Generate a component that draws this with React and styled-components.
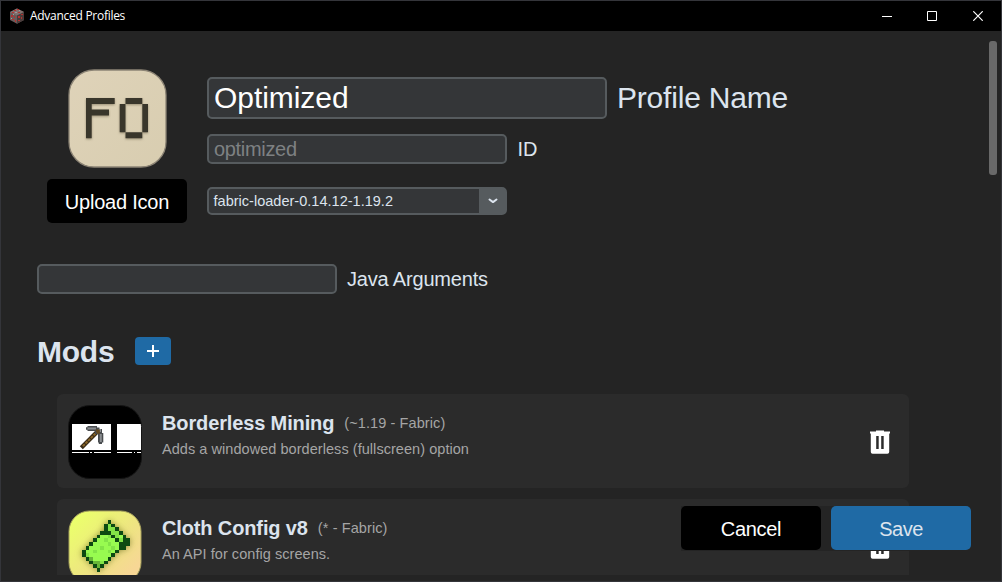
import React from "react";
import styled, { createGlobalStyle } from "styled-components";

const Global = createGlobalStyle`
  * { box-sizing: border-box; }
  body { margin: 0; background: #242424; }
  button, input { font-family: "Liberation Sans", Arial, sans-serif; }
`;

const Window = styled.div`
  position: relative;
  display: flex;
  flex-direction: column;
  width: 1002px;
  height: 582px;
  overflow: hidden;
  background: #242424;
  border: 1px solid #34353a;
  font-family: "Liberation Sans", Arial, sans-serif;
  color: #dce4ee;
  white-space: nowrap;
`;

const TitleBar = styled.header`
  display: flex;
  align-items: center;
  flex: none;
  height: 30px;
  padding-left: 8px;
  background: #000;
`;

const TitleText = styled.span`
  flex: 1;
  margin-left: 5px;
  font: 12px/16px "Open Sans", "Noto Sans", sans-serif;
  letter-spacing: -0.28px;
  color: #fff;
`;

const Control = styled.div`
  display: grid;
  place-items: center;
  width: ${(p) => p.$width || 46}px;
  height: 30px;
`;

const Body = styled.main`
  display: flex;
  flex: none;
  height: 544px;
  justify-content: space-between;
  overflow: hidden;
`;

const Content = styled.div`
  display: flex;
  flex-direction: column;
  width: 908px;
  padding: 38px 0 0 36px;
`;

const ScrollThumb = styled.div`
  width: 8px;
  height: 134px;
  margin: 10px 4px 0 0;
  border-radius: 3px;
  background: #696969;
`;

const ProfileHeader = styled.section`
  display: flex;
  height: 154px;
  padding-left: 10px;
`;

const IconColumn = styled.div`
  display: flex;
  flex-direction: column;
  align-items: center;
  width: 140px;
  margin-right: 20px;
  gap: 11px;
`;

const Fields = styled.div`
  display: flex;
  flex-direction: column;
  align-items: flex-start;
  padding-top: 8px;
`;

const FieldRow = styled.label`
  display: flex;
  align-items: center;
  gap: ${(p) => p.$gap || 10}px;
  margin-bottom: ${(p) => p.$below || 0}px;
  font-size: ${(p) => p.$size}px;
  letter-spacing: ${(p) => p.$spacing || 0}px;
`;

const Input = styled.input`
  width: ${(p) => p.$width}px;
  height: ${(p) => p.$height}px;
  padding: 0 5px;
  border: 2px solid #565b5e;
  border-radius: 5px;
  outline: none;
  background: #343638;
  color: #fff;
  font-size: inherit;
  letter-spacing: ${(p) => p.$spacing || 0}px;
  &::placeholder { color: #7e8183; opacity: 1; }
`;

const Combo = styled.div`
  display: flex;
  width: 300px;
  height: 28px;
  border: 2px solid #565b5e;
  border-radius: 5px;
  background: #343638;
  font-size: 14.5px;
  line-height: 24px;
`;

const ComboValue = styled.span`
  flex: 1;
  padding-left: 4.5px;
  letter-spacing: 0.02px;
`;

const ComboArrow = styled.span`
  display: grid;
  place-items: center;
  width: 26px;
  padding-left: 2px;
  background: #565b5e;
`;

const Button = styled.button`
  width: 140px;
  height: 44px;
  padding: 2px 0 0;
  border: 0;
  border-radius: 5px;
  background: ${(p) => (p.$primary ? "#1f6aa5" : "#000")};
  color: ${(p) => (p.$primary ? "#dce4ee" : "#fff")};
  font-size: 20px;
  letter-spacing: ${(p) => p.$spacing || 0}px;
`;

const JavaSection = styled.section`
  margin-top: 41px;
`;

const ModsHeader = styled.section`
  display: flex;
  align-items: center;
  height: 34px;
  margin-top: 40px;
  gap: 21px;
`;

const Heading = styled.h2`
  width: 77px;
  margin: 0;
  padding-top: 2px;
  font-size: 30px;
  line-height: 34px;
  letter-spacing: -0.25px;
`;

const AddButton = styled.button`
  display: grid;
  place-items: center;
  width: 36px;
  height: 28px;
  padding: 0;
  border: 0;
  border-radius: 4px;
  background: #1f6aa5;
`;

const ModList = styled.section`
  display: flex;
  flex-direction: column;
  gap: 11px;
  margin: 26px 0 0 20px;
`;

const ModCard = styled.article`
  display: flex;
  flex: none;
  width: 852px;
  height: 94px;
  padding: 11px 19px 0 11px;
  border-radius: 6px;
  background: #2b2b2b;
`;

const ModText = styled.div`
  flex: 1;
  margin-left: 20px;
  padding-top: 6px;
`;

const ModTitle = styled.div`
  display: flex;
  align-items: center;
  gap: 10px;
  height: 24px;
  font-size: 20px;
  font-weight: bold;
  letter-spacing: -0.13px;
`;

const ModVersion = styled.span`
  color: #a5a5a5;
  font-size: 14.5px;
  font-weight: normal;
  letter-spacing: 0.1px;
`;

const ModDescription = styled.div`
  margin-top: 5px;
  color: #a5a5a5;
  font-size: 14.5px;
  line-height: 18px;
  letter-spacing: 0.05px;
`;

const TrashSlot = styled.div`
  padding-top: 25px;
`;

const Actions = styled.footer`
  position: absolute;
  left: 680px;
  top: 505px;
  display: flex;
  align-items: flex-start;
  gap: 10px;
  height: 45px;
  background: #242424;
`;

const OreIcon = () => (
  <svg width="16" height="16" viewBox="0 0 16 16">
    <path d="M8 .5 15 4v8l-7 3.700L1 12V4z" fill="#685c5b" />
    <path d="M8 .5 15 4 8 7.500 1 4z" fill="#82706f" />
    <path d="M8 7.500 15 4v8l-7 3.700z" fill="#493b3a" />
    <path d="M5 2h2v1H5zM8 1h2v1H8zM9 4h2v1H9zM3 4h2v1H3zM2 7h2v2H2zM5 8h1v2H5zM3 11h2v1H3zM6 12h1v2H6zM9 8h2v2H9zM12 6h2v1h-2zM12 9h1v2h-1zM9 12h2v1H9z" fill="#b5302e" />
    <path d="M6 4h2v1H6zM10 2h1v1h-1zM2 10h1v1H2zM4 6h1v1H4z" fill="#a39a98" />
  </svg>
);

const ProfileIcon = () => (
  <svg width="99" height="99" viewBox="0 0 99 99">
    <defs>
      <linearGradient id="sand" x1="0" y1="0" x2="1" y2="1">
        <stop offset="0" stopColor="#dfd3b9" />
        <stop offset="1" stopColor="#d8cdb0" />
      </linearGradient>
    </defs>
    <rect x="1" y="1" width="97" height="97" rx="25" fill="url(#sand)" stroke="#8c8475" strokeWidth="1.3" />
    <g fill="#39362b" style={{ filter: "drop-shadow(.5px 1.500px 1px rgba(90,80,55,.5))" }}>
      <path d="M18 29h28.700v6H23.700v5.500H41v6H23.700v22.800H18z" />
      <path d="M57.500 29h16.800v6H80v28.300h-5.700v6H57.500v-6h-5.800V35h5.800zm0 6v28.300h16.800V35z" fillRule="evenodd" />
    </g>
  </svg>
);

const MiningIcon = () => (
  <svg width="74" height="74" viewBox="0 0 74 74">
    <clipPath id="round"><rect x=".5" y=".5" width="73" height="73" rx="21" /></clipPath>
    <g clipPath="url(#round)">
      <rect width="74" height="74" fill="#000" />
      <path d="M4 19h39v26H4zM49 19h25v26H49z" fill="#fff" />
      <path d="M4 47h17v1H4zM22 47h2v1h-2zM26 47h17v1H26zM49 47h15v1H49zM66 47h1v1h-1zM69 47h5v1h-5z" fill="#fff" />
      <path d="M14.800 41.200 30 26" stroke="#392b17" strokeWidth="4.200" strokeLinecap="square" />
      <path d="M14.800 41.200 30 26" stroke="#8a6628" strokeWidth="1.900" strokeDasharray="2.800 1" />
      <path d="M19.500 21H29v1.400h2.500V24H34v4h1.300v9.500H34V39h-3.200v-1.500H30V29h-3v-3h-7.500v-1.300H18v-2.500h1.500z" fill="#484b4e" />
      <path d="M19.500 22.500H28v2h-8.500zM31.800 29h2v8h-2zM30.500 24H33v3h-2z" fill="#8b8e91" />
      <path d="M27.500 24.500h4.300v4.200h-3z" fill="#654a20" />
    </g>
    <rect x=".5" y=".5" width="73" height="73" rx="21" fill="none" stroke="#151515" />
  </svg>
);

const clothRows = [
  ".......D.....",
  "......DgD....",
  "......DggD...",
  ".....DDDggD..",
  "....DGGgDgGD.",
  "...DGGgGGDgDD",
  "..DGGGGgGGDDD",
  ".DGGGgGGgGDD.",
  "DGGgGGGgGD...",
  "DgGGGGGGD....",
  ".DmGGGGD.....",
  "..DmmgD......",
  "...DmD.......",
  "....D........",
];
const clothColors = { D: "#0d4a12", G: "#98fb50", g: "#83e447", m: "#67b638" };

const ClothIcon = () => (
  <svg width="74" height="74" viewBox="0 0 74 74">
    <defs>
      <linearGradient id="lemon" x1="0" y1="0" x2="1" y2="1">
        <stop offset=".1" stopColor="#ebff6c" />
        <stop offset=".55" stopColor="#eee482" />
        <stop offset=".85" stopColor="#f7d795" />
      </linearGradient>
    </defs>
    <rect x="1" y="1" width="72" height="72" rx="20.5" fill="url(#lemon)" stroke="#a9a45e" strokeWidth="1" />
    <g transform="translate(13.8 9.9) scale(3.7)" style={{ filter: "drop-shadow(.5px .7px .9px rgba(90,90,20,.65))" }} shapeRendering="crispEdges">
      {clothRows.flatMap((row, y) =>
        [...row].map((c, x) =>
          c === "." ? null : <rect key={`${x}-${y}`} x={x} y={y} width="1.02" height="1.02" fill={clothColors[c]} />
        )
      )}
    </g>
  </svg>
);

const TrashIcon = () => (
  <svg width="20" height="24" viewBox="0 0 20 24">
    <path fillRule="evenodd" d="M6 .400h8V1.500h6v2h-.800V22a1.800 1.800 0 0 1-1.800 1.800H2.600A1.800 1.800 0 0 1 .800 22V3.500H0v-2h6zM6.200 6v13h2.500V6zm5 0v13h2.500V6z" fill="#fff" />
  </svg>
);

const mods = [
  { name: "Borderless Mining", version: "(~1.19 - Fabric)", text: "Adds a windowed borderless (fullscreen) option", Icon: MiningIcon },
  { name: "Cloth Config v8", version: "(* - Fabric)", text: "An API for config screens.", Icon: ClothIcon },
];

export default function App() {
  return (
    <Window>
      <Global />
      <TitleBar>
        <OreIcon />
        <TitleText>Advanced Profiles</TitleText>
        <Control>
          <svg width="10" height="10"><path d="M0 5.500h10" stroke="#fff" /></svg>
        </Control>
        <Control $width={45}>
          <svg width="11" height="10"><path d="M.500 .5h9v9h-9z" fill="none" stroke="#fff" /></svg>
        </Control>
        <Control>
          <svg width="10" height="10"><path d="m.3.300 9.400 9.400M9.700.300.300 9.700" stroke="#fff" strokeWidth="1.200" /></svg>
        </Control>
      </TitleBar>
      <Body>
        <Content>
          <ProfileHeader>
            <IconColumn>
              <ProfileIcon />
              <Button $spacing={-0.22}>Upload Icon</Button>
            </IconColumn>
            <Fields>
              <FieldRow $size={30} $below={15} $spacing={-0.2}>
                <Input $width={400} $height={42} $spacing={-0.05} defaultValue="Optimized" />
                Profile Name
              </FieldRow>
              <FieldRow $size={20} $below={23} $gap={10.5} $spacing={-0.1}>
                <Input $width={300} $height={30} $spacing={-0.32} placeholder="optimized" />
                ID
              </FieldRow>
              <Combo>
                <ComboValue>fabric-loader-0.14.12-1.19.2</ComboValue>
                <ComboArrow>
                  <svg width="10" height="6" viewBox="0 0 10 6"><path d="m1.500 1.500 3.500 2.600 3.500-2.600" fill="none" stroke="#dce4ee" strokeWidth="2" strokeLinecap="round" strokeLinejoin="round" /></svg>
                </ComboArrow>
              </Combo>
            </Fields>
          </ProfileHeader>
          <JavaSection>
            <FieldRow $size={20} $spacing={-0.18}>
              <Input $width={300} $height={30} />
              Java Arguments
            </FieldRow>
          </JavaSection>
          <ModsHeader>
            <Heading>Mods</Heading>
            <AddButton aria-label="Add mod">
              <svg width="12" height="12"><path d="M6 0v12M0 6h12" stroke="#fff" strokeWidth="2" /></svg>
            </AddButton>
          </ModsHeader>
          <ModList>
            {mods.map(({ name, version, text, Icon }) => (
              <ModCard key={name}>
                <Icon />
                <ModText>
                  <ModTitle>{name}<ModVersion>{version}</ModVersion></ModTitle>
                  <ModDescription>{text}</ModDescription>
                </ModText>
                <TrashSlot><TrashIcon /></TrashSlot>
              </ModCard>
            ))}
          </ModList>
        </Content>
        <ScrollThumb />
      </Body>
      <Actions>
        <Button $spacing={-0.3}>Cancel</Button>
        <Button $primary $spacing={-0.5}>Save</Button>
      </Actions>
    </Window>
  );
}
